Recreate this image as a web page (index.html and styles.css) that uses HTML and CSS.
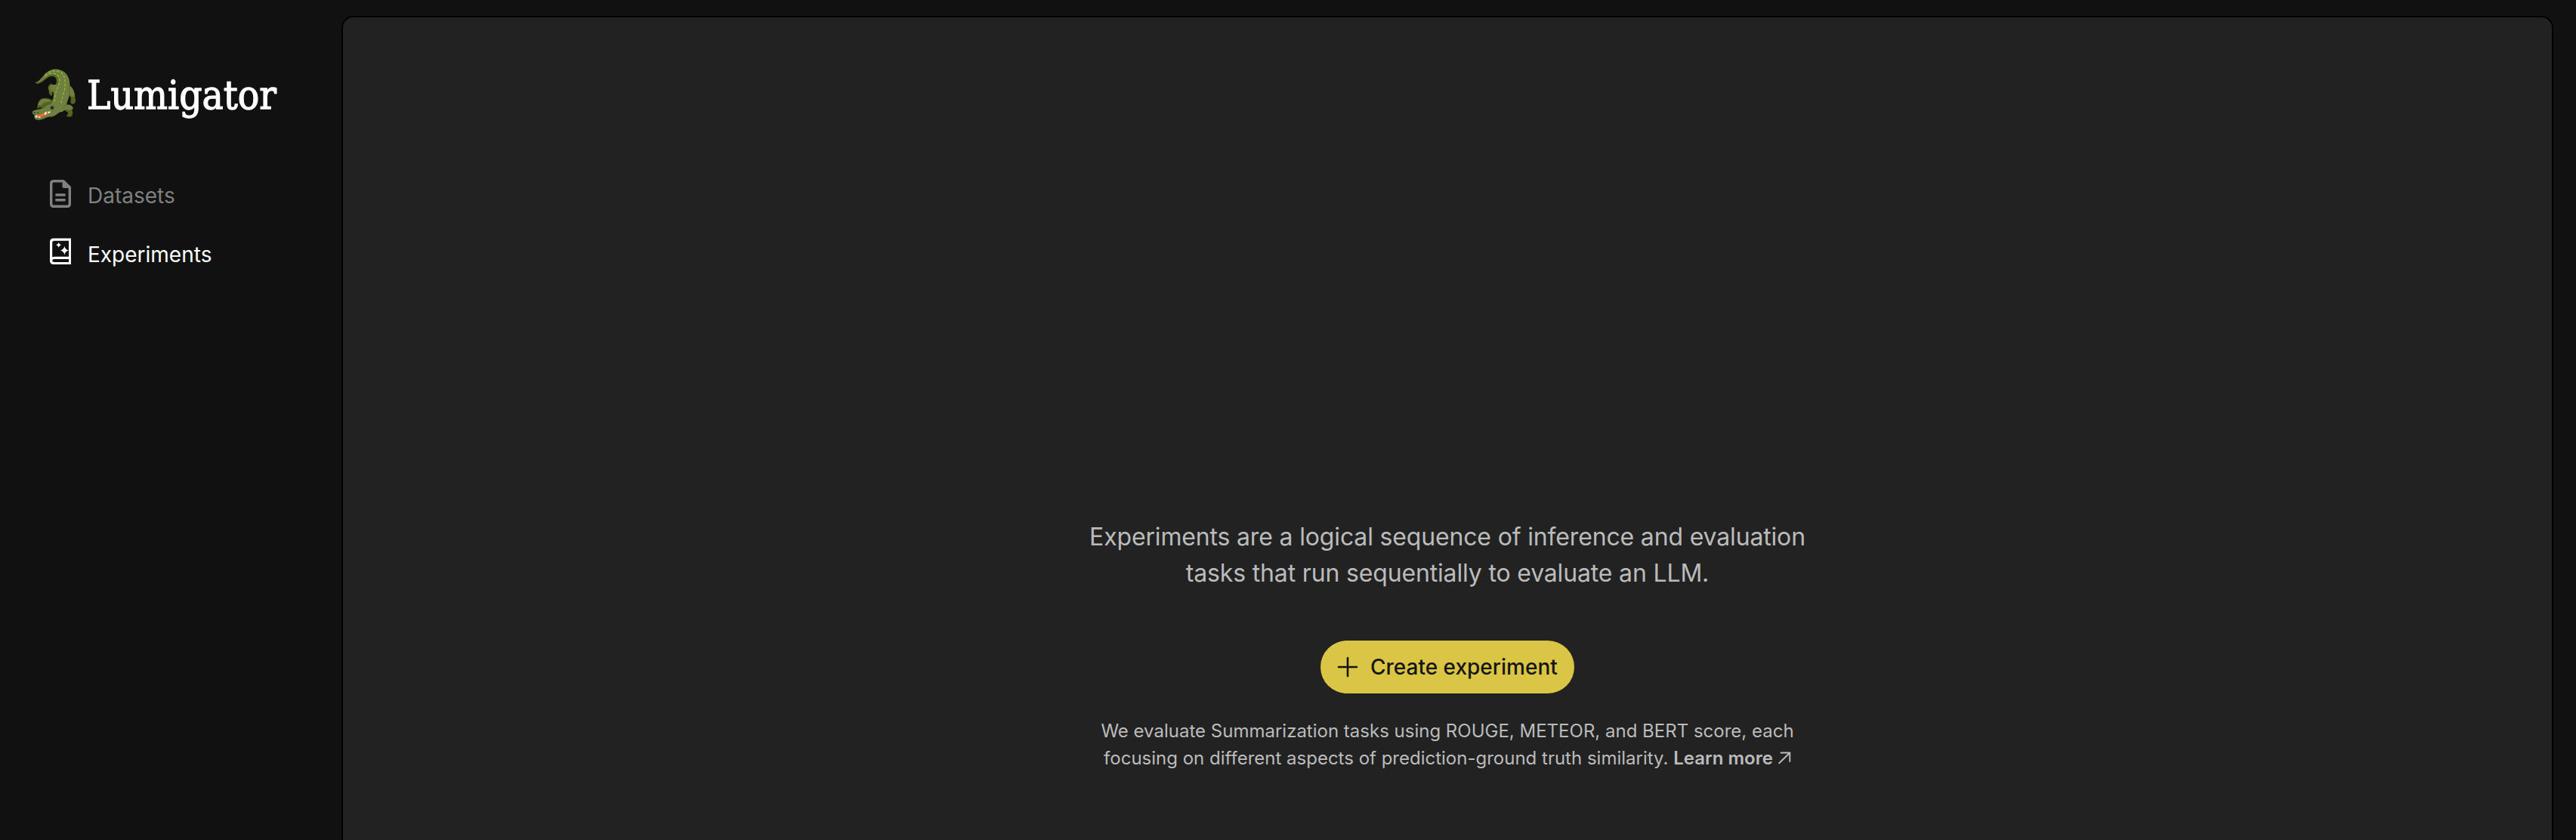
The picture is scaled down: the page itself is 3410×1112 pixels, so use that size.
FILE: index.html
```
<!DOCTYPE html>
<html lang="en">
<head>
<meta charset="utf-8">
<title>Lumigator</title>
<link rel="stylesheet" href="styles.css">
</head>
<body>
<div class="app">
  <aside class="sidebar">
    <div class="brand">
      <svg class="gator" viewBox="36 30 180 210" aria-hidden="true">
        <g fill="#56631f">
          <path d="M113 92C101 98 99 108 104 116C103 128 106 138 116 140L124 100Z"/>
          <path d="M57 188C63 170 64 153 80 151C93 148 108 151 117 157L118 182L78 188L68 186C64 190 57 193 57 188Z"/>
          <path d="M183 100C203 116 211 137 208 148C214 162 208 174 198 173C188 172 190 160 192 150L182 132Z"/>
          <path d="M160 181L187 190C201 193 200 213 196 221C188 226 177 223 174 221C175 216 181 215 180 207L163 195Z"/>
        </g>
        <path fill="#6d8040" d="M52 87C72 83 86 44 118 36C153 28 187 53 187 92C189 112 188 130 184 145C180 157 175 167 175 176C188 174 200 181 201 192C190 200 177 195 168 197C160 198 163 205 150 205C139 209 132 221 115 224C93 221 80 240 59 236C48 236 43 226 47 216C34 213 36 198 49 198C64 193 80 193 94 181C102 176 111 178 116 166C122 150 124 139 122 124C111 126 101 118 104 108C108 94 120 96 132 96C137 82 136 69 124 63C97 55 80 93 54 91C51 91 50 89 52 87Z"/>
        <path fill="#6d8040" d="M184 98C198 104 207 124 205 140C202 147 193 145 187 139L182 124Z"/>
        <path fill="#6d8040" d="M60 176C64 158 82 150 96 154C106 155 112 162 108 165C94 163 82 167 76 177Q68 180 60 176Z"/>
        <path fill="none" stroke="#56631f" stroke-width="5" stroke-linecap="round" d="M58 90C84 88 94 57 120 58C138 60 143 76 137 96"/>
        <path fill="none" stroke="#56631f" stroke-width="2" stroke-linecap="round" d="M186 104C184 118 186 130 189 139M175 176C168 178 162 182 161 190M109 104C108 114 114 122 122 124"/>
        <path fill="none" stroke="#a1b92e" stroke-width="3.6" stroke-linecap="round" stroke-dasharray="8 9" d="M89 57C102 44 124 38 145 44C170 54 171 82 166 119C161 138 156 149 152 174M91 63C114 44 137 51 144 67C149 82 145 98 137 112C129 127 131 143 124 168"/>
        <circle cx="117" cy="188" r="7" fill="#27302a"/>
        <circle cx="47" cy="207" r="2.8" fill="#27302a"/><circle cx="61" cy="208" r="2.8" fill="#27302a"/>
        <path fill="#ef6a35" d="M50 218C69 221 82 206 108 202C114 205 108 210 99 213C83 218 76 228 58 227C53 227 49 223 50 218Z"/>
        <path fill="#fff" d="M51 219L60 220L56 227C51 227 49 223 51 219ZM63 228L66 221L72 227ZM86 215L88 206L96 204L94 212L90 217ZM101 211L101 205L108 202L110 206Z"/>
      </svg>
      <svg class="wordmark" viewBox="0 0 252 62"><text x="0" y="45" textLength="251" lengthAdjust="spacingAndGlyphs">Lumigator</text></svg>
    </div>
    <nav class="nav">
      <a class="nav-item">
        <svg class="nav-icon" viewBox="0 0 28 37"><path fill="none" stroke="currentColor" stroke-width="3.4" stroke-linejoin="round" d="M5 1.7H18L26.3 10V32Q26.3 35.3 23 35.3H5Q1.7 35.3 1.7 32V5Q1.7 1.7 5 1.7Z"/><path fill="currentColor" d="M16.5 1H19L27 9V11H18.5Q16.5 11 16.5 9Z"/><path stroke="currentColor" stroke-width="3.4" stroke-linecap="round" d="M8.7 20H19.3M8.7 26.7H19.3"/></svg>
        <span>Datasets</span>
      </a>
      <a class="nav-item active">
        <svg class="nav-icon" viewBox="0 0 28 37"><path fill="currentColor" fill-rule="evenodd" d="M5 .4H28V35H5Q0 35 0 30V5.4Q0 .4 5 .4ZM6 3.8Q3.2 3.8 3.2 6.5V25.2Q4.3 24.8 6 24.8H25V3.8ZM5.6 28Q3.2 28 3.2 30T5.6 32H25V28Z"/><path fill="currentColor" d="M11.7 6Q12.4 8.5 15 9.2Q12.4 10 11.7 12.6Q11 10 8.3 9.2Q11 8.5 11.7 6ZM19.4 11Q20.5 15.3 24.8 16.6Q20.5 17.8 19.4 22.2Q18.3 17.8 14 16.6Q18.3 15.3 19.4 11Z"/></svg>
        <span>Experiments</span>
      </a>
    </nav>
  </aside>
  <main class="panel">
    <p class="lead">Experiments are a logical sequence of inference and evaluation<br>tasks that run sequentially to evaluate an LLM.</p>
    <button class="create" type="button">
      <svg class="plus" viewBox="0 0 28 28"><path stroke="currentColor" stroke-width="2.6" stroke-linecap="round" d="M14 2V26M2 14H26"/></svg>
      <span>Create experiment</span>
    </button>
    <p class="note">We evaluate Summarization tasks using ROUGE, METEOR, and BERT score, each<br>focusing on different aspects of prediction-ground truth similarity. <a class="more">Learn more <svg class="arrow" viewBox="0 0 17 17"><path fill="none" stroke="currentColor" stroke-width="1.9" stroke-linecap="round" stroke-linejoin="round" d="M1.2 15.3L15.3 1.5M3.5 1.5H15.3V13"/></svg></a></p>
  </main>
</div>
</body>
</html>
```
FILE: styles.css
```
* { box-sizing: border-box; }
body {
  margin: 0;
  background: #111;
  font-family: Inter, "Liberation Sans", sans-serif;
}
.app {
  display: flex;
  height: 1112px;
  padding: 21px 30px 0 0;
  overflow: hidden;
}
.sidebar { width: 452px; padding: 69px 42px 0; }
.brand { display: flex; align-items: flex-start; gap: 13px; height: 138px; }
.gator { width: 60px; height: 70px; flex: none; }
.wordmark {
  width: 252px;
  height: 62px;
  margin-top: 9px;
  flex: none;
  overflow: visible;
  font: 53px "DejaVu Serif", serif;
  fill: #fff;
  stroke: #fff;
  stroke-width: 1.3px;
}
.nav { padding-left: 24px; }
.nav-item {
  display: flex;
  align-items: flex-start;
  gap: 22px;
  height: 78px;
  padding-top: 10px;
  color: #808080;
  font-size: 28px;
  line-height: 42px;
}
.nav-item.active { color: #fff; }
.nav-icon { width: 28px; height: 37px; flex: none; }
.nav-item.active .nav-icon { margin-top: -1px; }
.panel {
  flex: 1;
  display: flex;
  flex-direction: column;
  align-items: center;
  height: 1200px;
  padding-top: 664px;
  border: 2px solid #000;
  border-radius: 16px;
  background: #222;
  color: #bbb;
  text-align: center;
}
.lead { margin: 0; font-size: 32px; line-height: 48px; letter-spacing: -0.16px; }
.create {
  display: flex;
  align-items: center;
  gap: 16px;
  width: 336px;
  height: 70px;
  margin: 65px 0 32px;
  padding: 0 0 0 22px;
  border: 0;
  border-radius: 35px;
  background: #dac544;
  color: #161616;
  font: 500 28px Inter, sans-serif;
  white-space: nowrap;
}
.plus { width: 28px; height: 28px; flex: none; }
.note { margin: 0; font-size: 24px; line-height: 36px; }
.more { font-weight: 600; }
.arrow { width: 17px; height: 17px; margin-left: 1px; }
```
